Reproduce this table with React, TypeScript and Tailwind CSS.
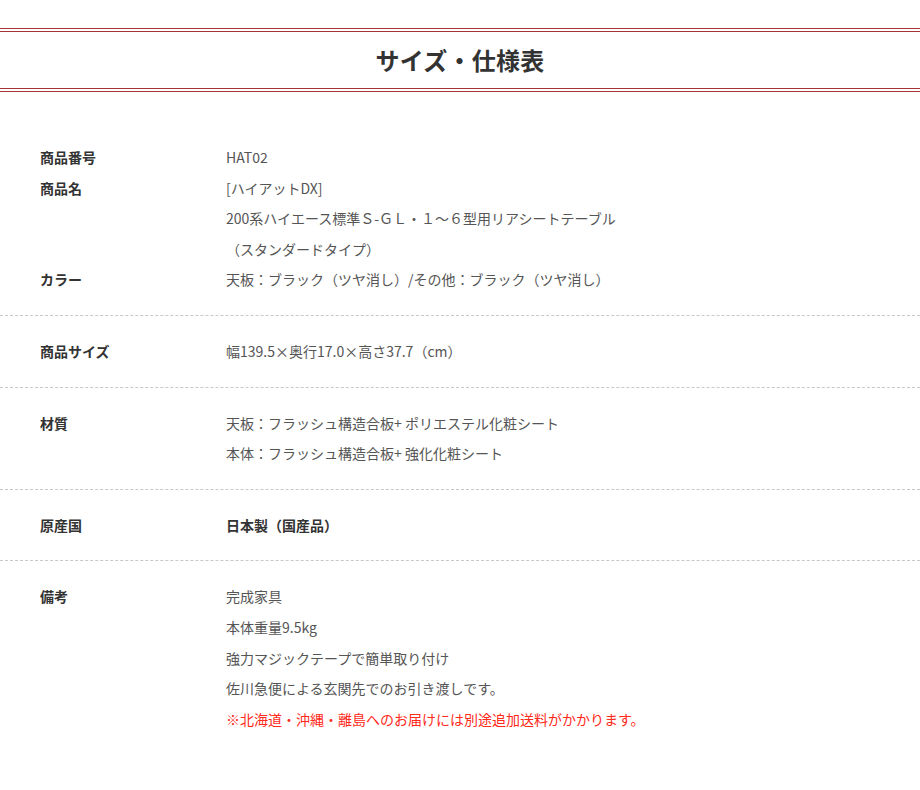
import React from "react";

const font = { fontFamily: '"Noto Sans CJK JP", "Noto Sans", sans-serif' };

type Row = { label: string; lines: React.ReactNode[]; bold?: boolean };

const rows: Row[][] = [
  [
    { label: "商品番号", lines: ["HAT02"] },
    {
      label: "商品名",
      lines: [
        "[ハイアットDX]",
        "200系ハイエース標準Ｓ-ＧＬ・１～６型用リアシートテーブル",
        "（スタンダードタイプ）",
      ],
    },
    { label: "カラー", lines: ["天板：ブラック（ツヤ消し）/その他：ブラック（ツヤ消し）"] },
  ],
  [{ label: "商品サイズ", lines: ["幅139.5×奥行17.0×高さ37.7（cm）"] }],
  [
    {
      label: "材質",
      lines: ["天板：フラッシュ構造合板+ ポリエステル化粧シート", "本体：フラッシュ構造合板+ 強化化粧シート"],
    },
  ],
  [{ label: "原産国", lines: ["日本製（国産品）"], bold: true }],
  [
    {
      label: "備考",
      lines: [
        "完成家具",
        "本体重量9.5kg",
        "強力マジックテープで簡単取り付け",
        "佐川急便による玄関先でのお引き渡しです。",
        <span className="text-[#ff2a1a]">※北海道・沖縄・離島へのお届けには別途追加送料がかかります。</span>,
      ],
    },
  ],
];

export default function App() {
  return (
    <div className="w-[920px] h-[790px] bg-white text-[14px]" style={font}>
      <div className="pt-[28px]">
        <div className="flex flex-col gap-[2px]">
          <div className="h-px bg-[#a3343a]" />
          <div className="h-px bg-[#a3343a]" />
        </div>
        <div className="h-[56px] flex items-center justify-center">
          <h1 className="text-[24px] font-bold text-[#333] leading-none tracking-[0.01em]">サイズ・仕様表</h1>
        </div>
        <div className="flex flex-col gap-[2px]">
          <div className="h-px bg-[#a3343a]" />
          <div className="h-px bg-[#a3343a]" />
        </div>
      </div>
      <div className="mt-[30px]">
        {rows.map((section, si) => (
          <div
            key={si}
            className={`py-[20px] ${si < rows.length - 1 ? "border-b border-dashed border-[#c8c8c8]" : ""}`}
          >
            {section.map((r, ri) => (
              <div key={ri} className="grid grid-cols-[186px_1fr] pl-[40px] leading-[30.6px]">
                <div className="font-bold text-[#333]">{r.label}</div>
                <div className={r.bold ? "font-bold text-[#333]" : "text-[#555]"}>
                  {r.lines.map((l, li) => (
                    <div key={li}>{l}</div>
                  ))}
                </div>
              </div>
            ))}
          </div>
        ))}
      </div>
    </div>
  );
}
